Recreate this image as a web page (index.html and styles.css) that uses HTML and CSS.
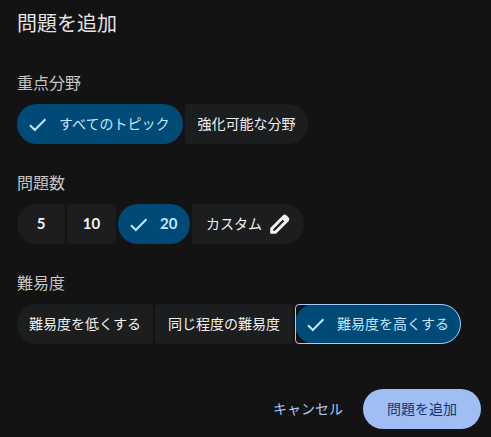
FILE: index.html
```html
<!DOCTYPE html>
<html lang="ja">
<head>
<meta charset="utf-8">
<title>問題を追加</title>
<link rel="stylesheet" href="styles.css">
</head>
<body>
<main class="dialog">
  <h1 class="title">問題を追加</h1>
  <section class="group">
    <h2 class="label">重点分野</h2>
    <div class="options">
      <button class="chip selected topic"><svg class="check" viewBox="0 0 18 14"><path d="M1 7.3 5.8 12 16.4 1.3"/></svg>すべてのトピック</button>
      <button class="chip last area">強化可能な分野</button>
    </div>
  </section>
  <section class="group">
    <h2 class="label">問題数</h2>
    <div class="options">
      <button class="chip first five">5</button>
      <button class="chip ten">10</button>
      <button class="chip selected twenty"><svg class="check" viewBox="0 0 18 14"><path d="M1 7.3 5.8 12 16.4 1.3"/></svg>20</button>
      <button class="chip last custom">カスタム<svg class="pencil" viewBox="0 0 20 20"><path d="M1.7 18.3v-3.7L13.6 2.7q1-1 2-.1l1.8 1.8q.9 1-.1 2L5.4 18.3z"/><path d="m12.5 3.5 4 4"/></svg></button>
    </div>
  </section>
  <section class="group">
    <h2 class="label">難易度</h2>
    <div class="options">
      <button class="chip first level">難易度を低くする</button>
      <button class="chip level same">同じ程度の難易度</button>
      <span class="focus"><button class="chip selected topic"><svg class="check" viewBox="0 0 18 14"><path d="M1 7.3 5.8 12 16.4 1.3"/></svg>難易度を高くする</button></span>
    </div>
  </section>
  <footer class="actions">
    <button class="cancel">キャンセル</button>
    <button class="submit">問題を追加</button>
  </footer>
</main>
</body>
</html>
```
FILE: styles.css
```css
* { box-sizing: border-box; }
body {
  margin: 0;
  background: #131313;
  color: #e3e3e3;
  font-family: "Open Sans", "Noto Sans CJK JP", sans-serif;
}
button {
  border: 0;
  padding: 0;
  font: inherit;
  white-space: nowrap;
}
.dialog {
  height: 437px;
  padding: 8px 10px 8px 17px;
  overflow: hidden;
}
.title {
  margin: 0 0 28px;
  height: 32px;
  font-size: 20px;
  line-height: 32px;
  font-weight: 400;
}
.group { height: 100px; }
.label {
  margin: 0;
  padding-top: 3px;
  height: 36px;
  font-size: 16px;
  line-height: 24px;
  font-weight: 400;
  color: #c4c7c5;
}
.options { display: flex; gap: 2px; }
.chip {
  display: flex;
  align-items: center;
  justify-content: center;
  height: 40px;
  padding-bottom: 2px;
  border-radius: 4px;
  background: #1b1d1e;
  color: #f2f2f2;
  font-size: 14px;
  font-weight: 400;
}
.first { border-radius: 20px 4px 4px 20px; }
.last { border-radius: 4px 20px 20px 4px; }
.selected {
  justify-content: flex-start;
  padding-left: 12px;
  border-radius: 20px;
  background: #004a77;
  color: #c2e7ff;
}
.topic { width: 166px; }
.area { width: 123px; }
.five { width: 48px; }
.ten { width: 49px; }
.twenty { width: 72px; }
.custom { width: 112px; gap: 8px; }
.level { width: 136px; }
.same { width: 138px; }
.five, .ten, .twenty {
  font-family: Lato, sans-serif;
  font-size: 15px;
  font-weight: 700;
}
.check {
  width: 18px;
  height: 14px;
  margin: 4px 12px 0 0;
  fill: none;
  stroke: currentColor;
  stroke-width: 2;
}
.pencil {
  width: 20px;
  height: 20px;
  margin-top: 2px;
  fill: none;
  stroke: currentColor;
  stroke-width: 3;
}
.focus {
  width: 166px;
  height: 40px;
  border-radius: 4px 20px 20px 4px;
  outline: 1px solid #a8c7fa;
  outline-offset: -1px;
  background: #101414;
}
.actions {
  display: flex;
  align-items: center;
  justify-content: flex-end;
  gap: 20px;
  margin-top: 21px;
  font-size: 14px;
}
.cancel {
  padding-bottom: 2px;
  background: none;
  color: #a8c7fa;
}
.submit {
  width: 118px;
  height: 40px;
  padding-bottom: 2px;
  border-radius: 20px;
  background: #a0bef3;
  color: #12366f;
}
```
